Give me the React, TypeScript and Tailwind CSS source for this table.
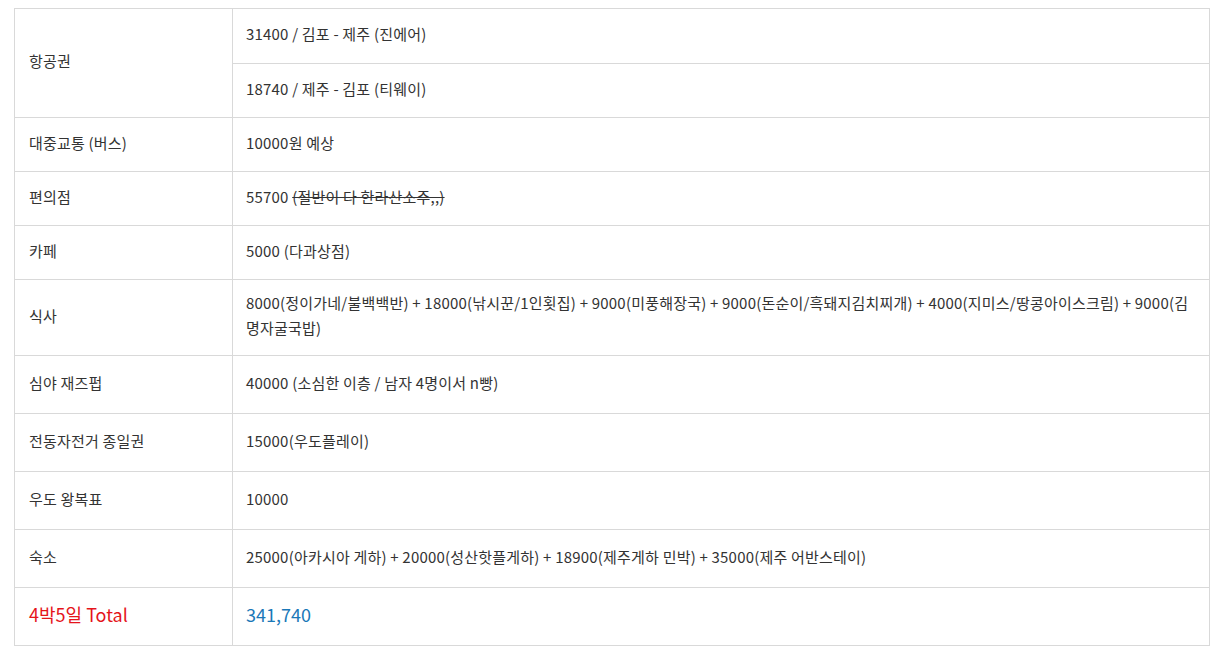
const ROWS: { label: string; value: React.ReactNode; h: string }[] = [
  { label: '대중교통 (버스)', value: '10000원 예상', h: 'h-[54px]' },
  {
    label: '편의점',
    value: (
      <>
        55700 <span className="line-through">(절반이 다 한라산소주,,)</span>
      </>
    ),
    h: 'h-[54px]',
  },
  { label: '카페', value: '5000 (다과상점)', h: 'h-[54px]' },
  {
    label: '식사',
    value:
      '8000(정이가네/불백백반) + 18000(낚시꾼/1인횟집) + 9000(미풍해장국) + 9000(돈순이/흑돼지김치찌개) + 4000(지미스/땅콩아이스크림) + 9000(김명자굴국밥)',
    h: 'h-[76px]',
  },
  { label: '심야 재즈펍', value: '40000 (소심한 이층 / 남자 4명이서 n빵)', h: 'h-[58px]' },
  { label: '전동자전거 종일권', value: '15000(우도플레이)', h: 'h-[58px]' },
  { label: '우도 왕복표', value: '10000', h: 'h-[58px]' },
  {
    label: '숙소',
    value: '25000(아카시아 게하) + 20000(성산핫플게하) + 18900(제주게하 민박) + 35000(제주 어반스테이)',
    h: 'h-[58px]',
  },
];

export default function App() {
  const cell = 'border border-[#d9d9d9] pb-[5px] align-middle';
  const left = `${cell} pl-[14px] pr-[15px]`;
  const right = `${cell} pl-[13px] pr-[15px]`;
  return (
    <div className="min-h-[655px] bg-white pl-[14px] pr-[17px] pt-[8px] font-['Noto_Sans_CJK_KR','Noto_Sans',sans-serif] text-[15px] leading-[25px] tracking-[0.2px] text-[#333]">
      <table className="w-full border-collapse">
        <colgroup>
          <col className="w-[218px]" />
          <col />
        </colgroup>
        <tbody>
          <tr className="h-[55px]">
            <td rowSpan={2} className={left}>
              항공권
            </td>
            <td className={right}>31400 / 김포 - 제주 (진에어)</td>
          </tr>
          <tr className="h-[54px]">
            <td className={right}>18740 / 제주 - 김포 (티웨이)</td>
          </tr>
          {ROWS.map((r) => (
            <tr key={r.label} className={r.h}>
              <td className={left}>{r.label}</td>
              <td className={right}>{r.value}</td>
            </tr>
          ))}
          <tr className="h-[58px]">
            <td className={`${left} text-[18px] tracking-normal text-[#e5141b]`}>4박5일 Total</td>
            <td className={`${right} text-[18px] tracking-normal text-[#1a78b8]`}>341,740</td>
          </tr>
        </tbody>
      </table>
    </div>
  );
}
